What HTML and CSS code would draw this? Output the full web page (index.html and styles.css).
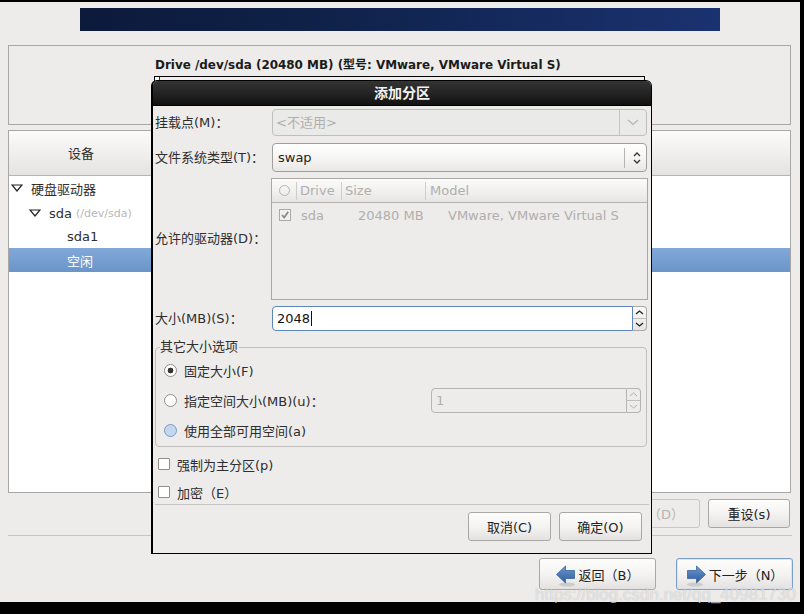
FILE: index.html
```html
<!DOCTYPE html>
<html lang="zh">
<head>
<meta charset="utf-8">
<title>添加分区</title>
<link rel="stylesheet" href="styles.css">
</head>
<body>
<div class="screen">
  <div class="banner"></div>
  <section class="drive-panel">
    <div class="drive-caption">Drive /dev/sda (20480 MB) (型号: VMware, VMware Virtual S)</div>
    <div class="drive-bar"><span class="drive-cell"></span></div>
  </section>
  <section class="table-panel">
    <div class="table-head"><div class="head-cell">设备</div></div>
    <div class="tree">
      <div class="tree-row lvl0">
        <svg class="expander" viewBox="0 0 12 8"><path d="M1 1h10L6 7z" fill="none" stroke="#222" stroke-width="1.2"/></svg>
        <span>硬盘驱动器</span>
      </div>
      <div class="tree-row lvl1">
        <svg class="expander" viewBox="0 0 12 8"><path d="M1 1h10L6 7z" fill="none" stroke="#222" stroke-width="1.2"/></svg>
        <span>sda</span><span class="dev-path">(/dev/sda)</span>
      </div>
      <div class="tree-row lvl2"><span>sda1</span></div>
      <div class="tree-row lvl2 selected"><span>空闲</span></div>
    </div>
  </section>
  <div class="action-row">
    <button class="btn btn-delete" disabled>删除（D）</button>
    <button class="btn btn-reset">重设(s)</button>
  </div>
  <hr class="rule">
  <div class="nav-row">
    <button class="btn nav-btn">
      <svg class="arrow" viewBox="0 0 20 22"><defs><linearGradient id="ga" x1="0" y1="0" x2="0" y2="1"><stop offset="0" stop-color="#6f9bd0"/><stop offset="1" stop-color="#2c5a9c"/></linearGradient></defs><ellipse cx="11" cy="19.5" rx="8" ry="2" fill="#ccc"/><path d="M0.5 9.5 9.5 1v4.5h9v8h-9V18z" fill="url(#ga)" stroke="#3a659f" stroke-width=".8"/></svg>
      <span>返回（B）</span>
    </button>
    <button class="btn nav-btn focused">
      <svg class="arrow" viewBox="0 0 20 22"><defs><linearGradient id="gb" x1="0" y1="0" x2="0" y2="1"><stop offset="0" stop-color="#6f9bd0"/><stop offset="1" stop-color="#2c5a9c"/></linearGradient></defs><ellipse cx="9" cy="19.5" rx="8" ry="2" fill="#ccc"/><path d="M19.5 9.5 10.5 1v4.5h-9v8h9V18z" fill="url(#gb)" stroke="#3a659f" stroke-width=".8"/></svg>
      <span>下一步（N）</span>
    </button>
  </div>
</div>

<div class="dialog">
  <div class="titlebar">添加分区</div>
  <div class="dialog-body">
    <div class="form-row row-mount">
      <label>挂载点(M)<span class="colon">：</span></label>
      <div class="combo disabled">
        <span class="combo-text">&lt;不适用&gt;</span>
        <span class="combo-btn"><svg class="chev" viewBox="0 0 12 7"><path d="M1 1l5 4.5L11 1" fill="none" stroke="#b5b4b2" stroke-width="1.2"/></svg></span>
      </div>
    </div>
    <div class="form-row row-fs">
      <label>文件系统类型(T)<span class="colon">：</span></label>
      <div class="combo active">
        <span class="combo-text">swap</span>
        <span class="combo-sort"><svg class="sort" viewBox="0 0 8 14"><path d="M1 5l3-3 3 3M1 9l3 3 3-3" fill="none" stroke="#333" stroke-width="1.3"/></svg></span>
      </div>
    </div>
    <div class="form-row row-drives">
      <label>允许的驱动器(D)<span class="colon">：</span></label>
      <div class="drive-list">
        <div class="list-head">
          <span class="lh lh-check"><span class="circle"></span></span>
          <span class="lh lh-drive">Drive</span>
          <span class="lh lh-size">Size</span>
          <span class="lh lh-model">Model</span>
        </div>
        <div class="list-row">
          <span class="cell-check"><svg class="tick" viewBox="0 0 12 12"><rect x=".5" y=".5" width="11" height="11" fill="#f2f1ef" stroke="#aaa"/><path d="M3 6l2.2 2.6L9.2 2.8" fill="none" stroke="#8b8b8b" stroke-width="1.8"/></svg></span>
          <span class="cell-drive">sda</span>
          <span class="cell-size">20480 MB</span>
          <span class="cell-model">VMware, VMware Virtual S</span>
        </div>
      </div>
    </div>
    <div class="form-row row-size">
      <label>大小(MB)(S)<span class="colon">：</span></label>
      <div class="spin">
        <div class="spin-input focus"><span>2048</span><i class="caret"></i></div>
        <div class="spin-btns">
          <span class="spin-up"><svg class="spin-ico" viewBox="0 0 9 5"><path d="M1 4l3.5-3L8 4" fill="none" stroke="#222" stroke-width="1.3"/></svg></span>
          <span class="spin-down"><svg class="spin-ico" viewBox="0 0 9 5"><path d="M1 1l3.5 3L8 1" fill="none" stroke="#222" stroke-width="1.3"/></svg></span>
        </div>
      </div>
    </div>
    <fieldset class="options">
      <legend>其它大小选项</legend>
      <div class="radio-row"><span class="radio checked"></span><span>固定大小(F)</span></div>
      <div class="radio-row">
        <span class="radio"></span><span>指定空间大小(MB)(u)<span class="colon">：</span></span>
        <div class="spin small">
          <div class="spin-input dim"><span>1</span></div>
          <div class="spin-btns dim">
            <span class="spin-up"><svg class="spin-ico" viewBox="0 0 9 5"><path d="M1 4l3.5-3L8 4" fill="none" stroke="#b0b0ae" stroke-width="1"/></svg></span>
            <span class="spin-down"><svg class="spin-ico" viewBox="0 0 9 5"><path d="M1 1l3.5 3L8 1" fill="none" stroke="#b0b0ae" stroke-width="1"/></svg></span>
          </div>
        </div>
      </div>
      <div class="radio-row"><span class="radio hover"></span><span>使用全部可用空间(a)</span></div>
    </fieldset>
    <div class="check-row"><span class="check"></span><span>强制为主分区(p)</span></div>
    <div class="check-row"><span class="check"></span><span>加密（E）</span></div>
    <hr class="dialog-rule">
    <div class="dialog-actions">
      <button class="btn dlg-btn">取消(C)</button>
      <button class="btn dlg-btn">确定(O)</button>
    </div>
  </div>
</div>
<div class="watermark">https://blog.csdn.net/qq_40981730</div>
</body>
</html>
```
FILE: styles.css
```css
* { box-sizing: border-box; }
html, body { margin: 0; height: 100%; }
body {
  background: #000;
  width: 804px;
  height: 614px;
  overflow: hidden;
  position: relative;
  font-family: "DejaVu Sans", "Noto Sans CJK SC", sans-serif;
  font-size: 13px;
  color: #2e2e2e;
}
.screen {
  width: 800px;
  height: 600px;
  margin-top: 2px;
  padding: 6px 0 0 8px;
  background: #edecea;
  display: flow-root;
}
.banner {
  width: 640px;
  height: 23px;
  margin-left: 72px;
  background: linear-gradient(90deg, #0c1a3c 0%, #0f2147 35%, #14295b 65%, #1a3270 100%);
}
.drive-panel {
  width: 783px;
  height: 80px;
  margin-top: 14px;
  border: 1px solid #a8a7a5;
  padding: 11px 0 0 146px;
}
.drive-caption {
  font-weight: bold;
  font-size: 11.95px;
  line-height: 16px;
  color: #1b1b1b;
  white-space: nowrap;
}
.drive-bar {
  width: 491px;
  height: 40px;
  margin-top: 3px;
  margin-left: -1px;
  border: 1px solid #000;
  background: #edecea;
}
.drive-cell {
  display: block;
  width: 5px;
  height: 6px;
  background: #fff;
  border-right: 1px solid #333;
}
.table-panel {
  width: 783px;
  height: 363px;
  margin-top: 5px;
  border: 1px solid #a8a7a5;
  background: #fff;
}
.table-head {
  height: 45px;
  border-bottom: 1px solid #b5b4b2;
  background: linear-gradient(180deg, #fbfbfa 0%, #f0efee 50%, #e4e3e1 100%);
}
.head-cell {
  width: 144px;
  line-height: 45px;
  text-align: center;
}
.tree { display: flex; flex-direction: column; }
.tree-row {
  height: 24px;
  display: flex;
  align-items: center;
  white-space: nowrap;
}
.lvl1 { padding-top: 2px; }
.lvl0 { padding-left: 2px; }
.lvl1 { padding-left: 20px; }
.lvl2 { padding-left: 58px; }
.expander { width: 12px; height: 8px; margin-right: 8px; flex: none; }
.dev-path { font-size: 11px; color: #b8b8b8; margin-left: 4px; padding-top: 1px; }
.selected {
  color: #fff;
  background: linear-gradient(180deg, #82a8d8 0%, #6a95c9 100%);
}
.btn {
  font: inherit;
  color: #222;
  height: 28px;
  border: 1px solid #a9a8a6;
  border-radius: 3px;
  background: linear-gradient(180deg, #fdfdfc 0%, #f4f3f2 50%, #e3e2e0 100%);
  padding: 0;
}
.action-row {
  width: 783px;
  display: flex;
  justify-content: flex-end;
  gap: 8px;
  margin-top: 6px;
}
.btn-delete {
  width: 94px;
  height: 29px;
  color: #b5b4b2;
  background: #edecea;
  border-color: #c8c7c5;
}
.btn-reset { width: 82px; height: 29px; margin-right: 1px; }
.rule {
  width: 784px;
  height: 1px;
  margin: 7px 0 0;
  border: 0;
  background: #c5c4c2;
}
.nav-row {
  width: 785px;
  display: flex;
  justify-content: flex-end;
  gap: 20px;
  margin-top: 22px;
}
.nav-btn {
  width: 117px;
  height: 32px;
  display: flex;
  align-items: center;
  justify-content: center;
  gap: 3px;
}
.focused { border-color: #7c9fc9; box-shadow: inset 0 0 0 1px #dbe5f1; }
.arrow { width: 20px; height: 22px; flex: none; margin-top: 3px; }

.dialog {
  position: absolute;
  left: 151px;
  top: 80px;
  width: 501px;
  height: 474px;
  background: #edecea;
  border: 1px solid #000;
  border-left-width: 2px;
  border-radius: 6px 6px 0 0;
  overflow: hidden;
}
.titlebar {
  height: 25px;
  line-height: 25px;
  text-align: center;
  font-weight: bold;
  font-size: 14px;
  color: #f2f2f2;
  border-bottom: 1px solid #000;
  background: linear-gradient(180deg, #333 0%, #262626 45%, #111 100%);
}
.dialog-body { padding: 3px 0 0 2px; }
.form-row {
  display: grid;
  grid-template-columns: 117px 375px;
  align-items: center;
}
.form-row label { white-space: nowrap; padding-bottom: 2px; }
.row-drives label { padding-bottom: 4px; }
.colon { font-family: "Noto Sans CJK TC", sans-serif; }
.row-mount { height: 27px; }
.row-fs { height: 29px; margin-top: 7px; }
.row-drives { height: 122px; margin-top: 6px; }
.row-size { height: 25px; margin-top: 6px; }
.combo {
  width: 375px;
  height: 100%;
  display: flex;
  align-items: center;
  border: 1px solid #a9a8a6;
  border-radius: 4px;
}
.combo.disabled { color: #b0afad; background: #eaeae8; border-color: #c0bfbd; }
.combo.disabled .combo-text { padding: 0 0 2px 3px; }
.combo.active {
  color: #222;
  border-color: #a09f9d;
  background: linear-gradient(180deg, #fff 0%, #f7f6f5 50%, #e8e7e5 100%);
}
.combo-text { flex: 1; padding-left: 5px; }
.combo-btn {
  width: 27px;
  align-self: stretch;
  border-left: 1px solid #c6c5c3;
  display: flex;
  align-items: center;
  justify-content: center;
}
.chev { width: 12px; height: 7px; }
.combo-sort {
  width: 22px;
  height: 20px;
  border-left: 1px solid #b5b4b2;
  display: flex;
  align-items: center;
  justify-content: center;
}
.sort { width: 8px; height: 14px; margin-left: 3px; }
.drive-list {
  width: 377px;
  height: 122px;
  margin-left: -1px;
  border: 1px solid #a9a8a6;
  color: #b0afad;
  background: #edecea;
}
.list-head {
  height: 24px;
  display: flex;
  align-items: center;
  border-bottom: 1px solid #b5b4b2;
  background: linear-gradient(180deg, #fbfbfa 0%, #f0efee 60%, #e6e5e3 100%);
}
.lh { display: flex; align-items: center; height: 18px; padding-left: 3px; border-left: 1px solid #cfcecc; }
.lh-check { width: 24px; padding-left: 7px; border-left: 0; }
.lh-drive { width: 45px; }
.lh-size { width: 84px; }
.lh-model { padding-left: 4px; }
.circle { width: 11px; height: 11px; border: 1px solid #b5b4b2; border-radius: 50%; }
.list-row { height: 24px; display: flex; align-items: center; }
.cell-check { width: 29px; padding-left: 7px; display: flex; }
.tick { width: 12px; height: 12px; }
.cell-drive { width: 57px; }
.cell-size { width: 90px; }
.cell-model { white-space: nowrap; }
.spin { display: flex; height: 100%; width: 375px; }
.spin-input {
  flex: 1;
  display: flex;
  align-items: center;
  padding-left: 4px;
  color: #111;
  background: #fff;
  border: 1px solid #a9a8a6;
  border-radius: 4px 0 0 4px;
}
.spin-input.focus { border-color: #5c85b8; }
.caret { width: 1px; height: 15px; background: #111; margin-left: 1px; }
.spin-btns {
  width: 14px;
  display: flex;
  flex-direction: column;
  border: 1px solid #a9a8a6;
  border-left: 0;
  border-radius: 0 4px 4px 0;
  background: linear-gradient(180deg, #fbfbfa 0%, #e6e5e3 100%);
}
.spin-up, .spin-down { flex: 1; display: flex; align-items: center; justify-content: center; }
.spin-up { border-bottom: 1px solid #c0bfbd; }
.spin-ico { width: 9px; height: 5px; }
.options {
  width: 492px;
  height: 107px;
  min-width: 0;
  margin: 9px 0 0;
  padding: 1px 0 0;
  border: 1px solid #c0bfbd;
  border-radius: 4px;
}
.options legend {
  margin-left: 4px;
  padding: 0 1px 0 0;
  line-height: 14px;
  color: #2e2e2e;
}
.radio-row {
  height: 30px;
  display: flex;
  align-items: center;
  gap: 7px;
  padding-left: 8px;
}
.radio {
  width: 13px;
  height: 13px;
  flex: none;
  border: 1px solid #8f8e8c;
  border-radius: 50%;
  background: #fff;
}
.radio.checked { background: radial-gradient(circle, #333 0 2.6px, #fff 3.2px); }
.radio.hover { background: #c5d7ec; border-color: #7a9bc4; }
.spin.small {
  width: 210px;
  height: 25px;
  margin-left: auto;
  margin-right: 5px;
}
.spin-input.dim { color: #b0afad; background: #edecea; border-color: #b5b4b2; padding-left: 4px; }
.spin-btns.dim { border-color: #b5b4b2; background: #edecea; }
.check-row {
  height: 24px;
  display: flex;
  align-items: center;
  gap: 7px;
  padding-left: 3px;
  margin-top: 4px;
}
.options + .check-row { margin-top: 5px; }
.check {
  width: 12px;
  height: 12px;
  flex: none;
  border: 1px solid #8f8e8c;
  background: #fff;
  border-radius: 1px;
}
.dialog-rule {
  width: 494px;
  height: 1px;
  margin: 0;
  border: 0;
  background: #c5c4c2;
}
.dialog-actions {
  display: flex;
  justify-content: flex-end;
  gap: 8px;
  width: 487px;
  margin-top: 7px;
}
.dlg-btn { width: 83px; height: 29px; }
.watermark {
  position: absolute;
  right: 8px;
  top: 585px;
  font-family: "Liberation Sans", sans-serif;
  font-size: 17px;
  line-height: 20px;
  color: rgba(255, 255, 255, .6);
  text-shadow: 0 0 1px rgba(0, 0, 0, .25);
  white-space: nowrap;
}
```
